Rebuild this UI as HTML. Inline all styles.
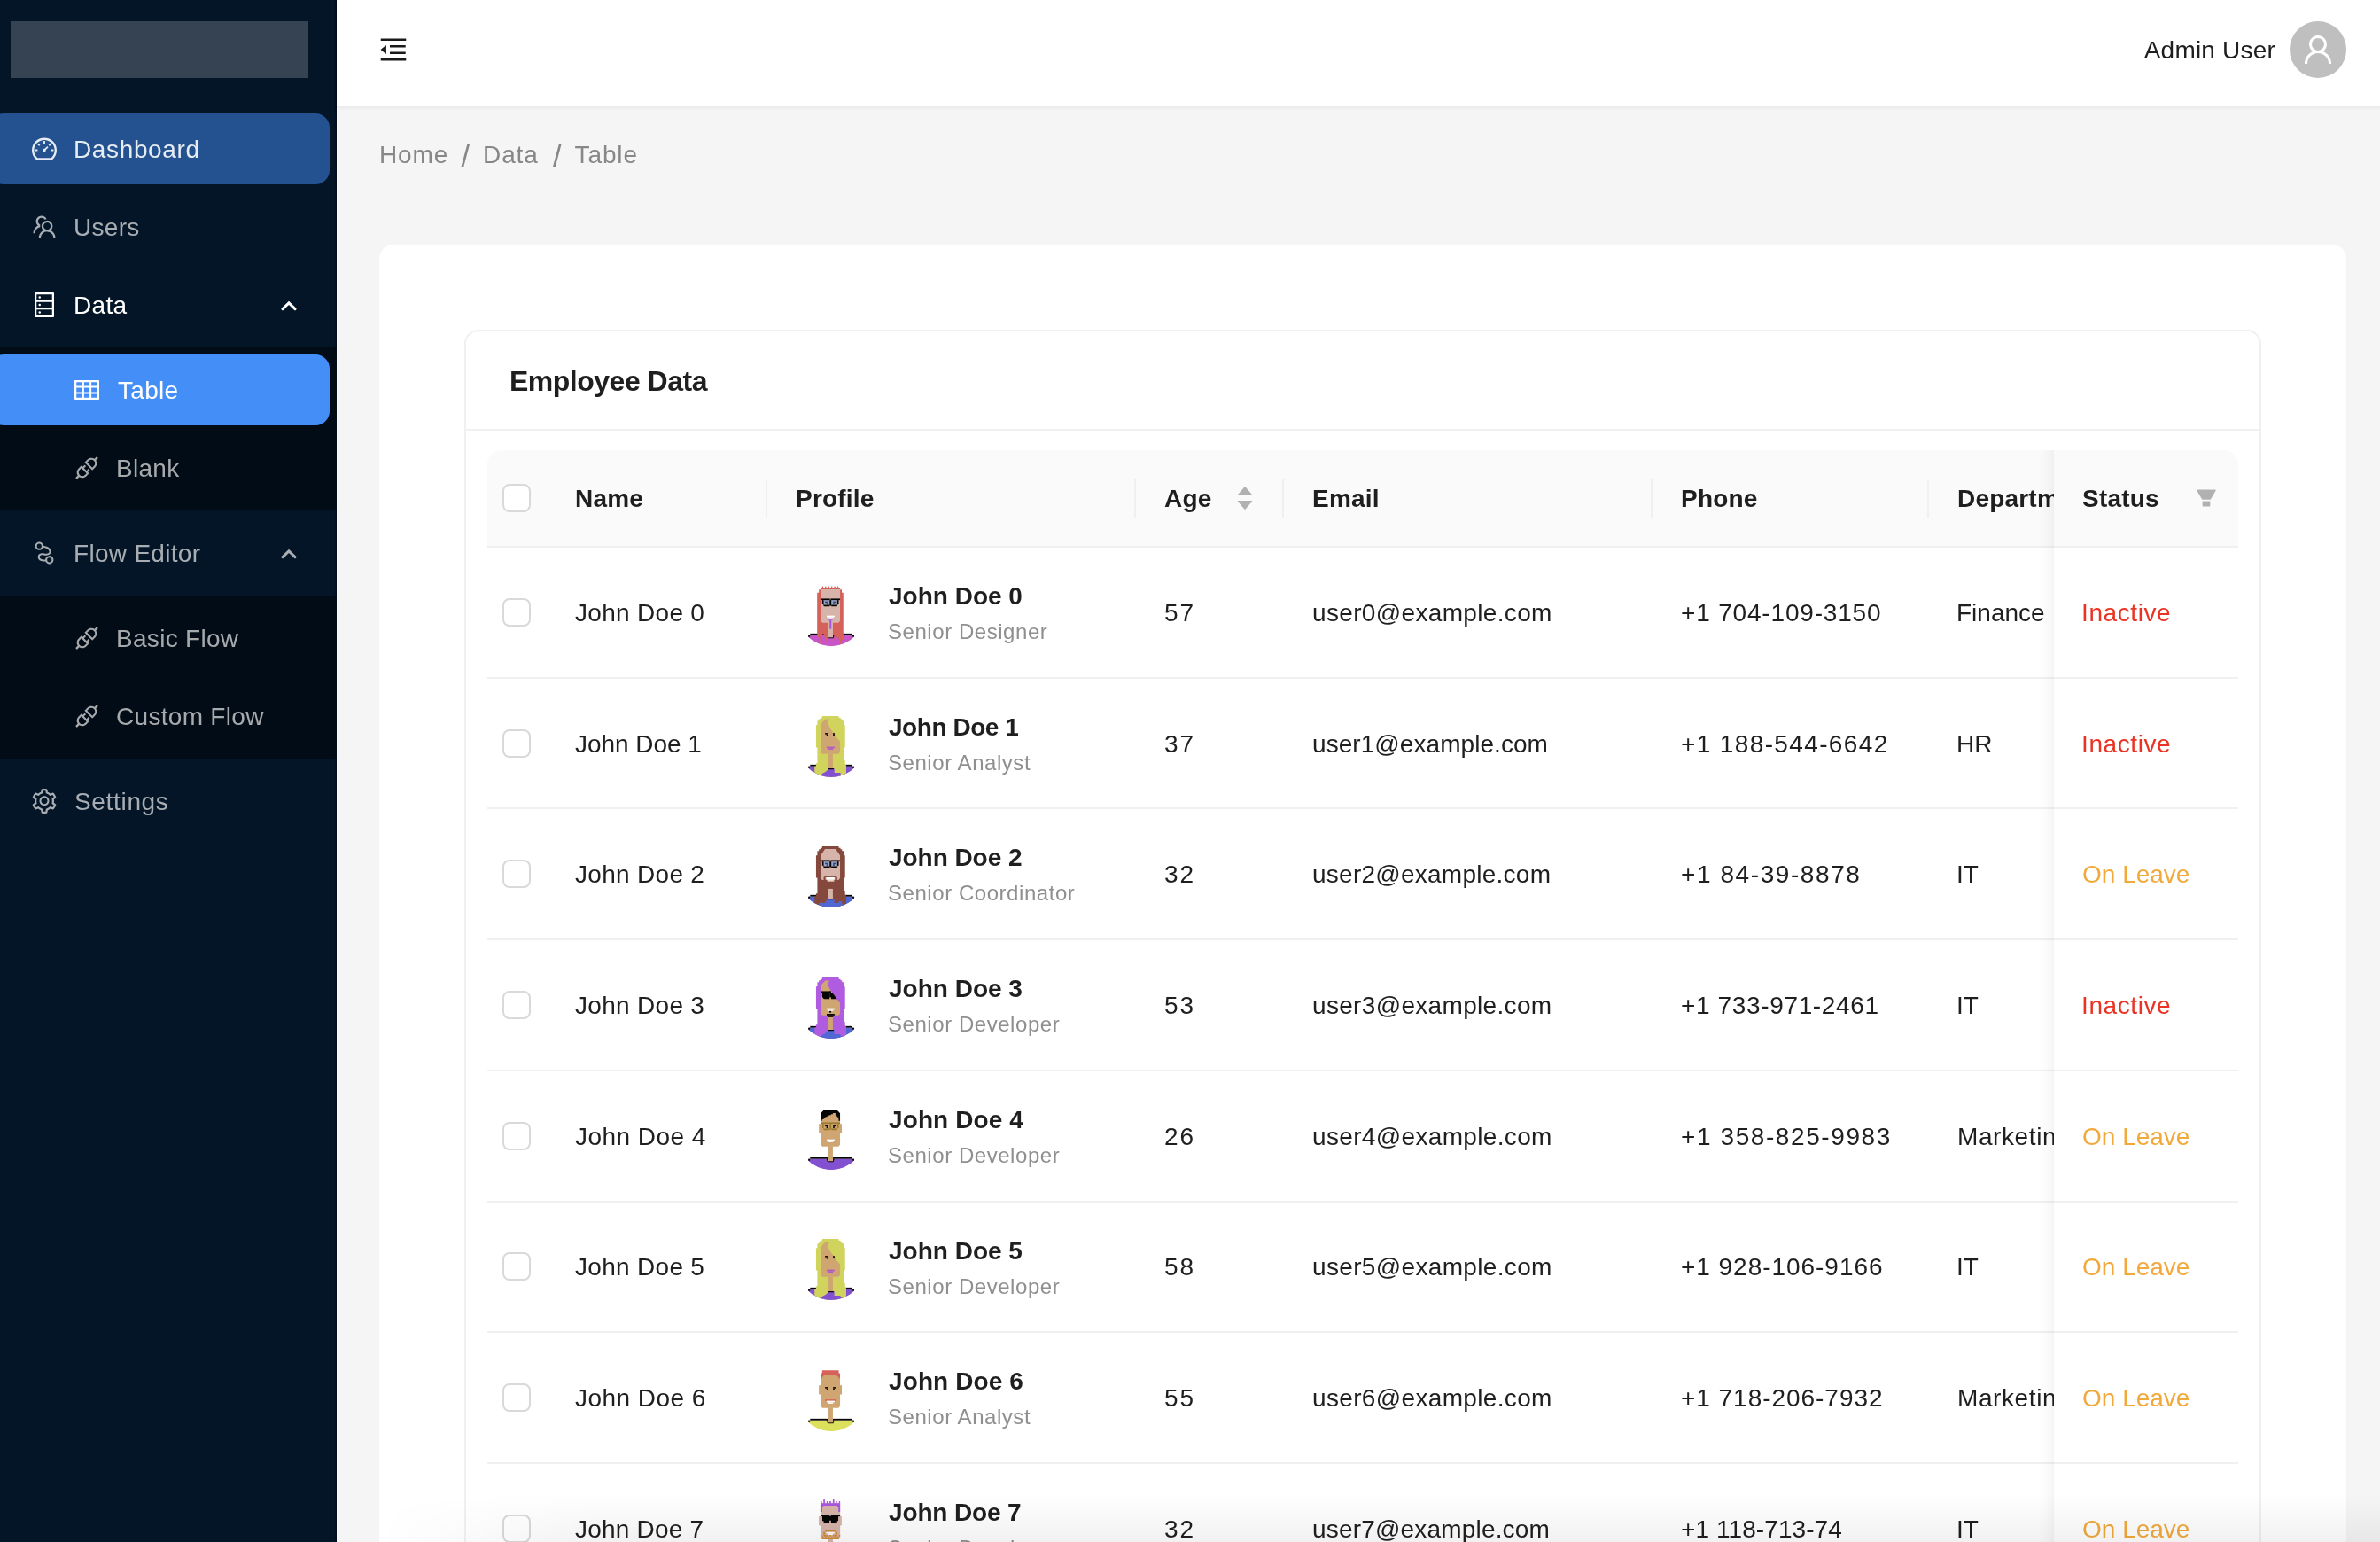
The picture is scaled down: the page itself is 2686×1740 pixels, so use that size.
<!DOCTYPE html>
<html lang="en">
<head>
<meta charset="utf-8">
<title>Employee Data</title>
<style>
*{box-sizing:border-box;margin:0;padding:0}
html,body{width:2686px;height:1740px;overflow:hidden;background:#f5f5f5}
body{font-family:"Liberation Sans",sans-serif;font-size:28px;line-height:44px;color:#1f1f1f;-webkit-font-smoothing:antialiased}
ul{list-style:none}
.app{position:relative;width:2686px;height:1740px;overflow:hidden;will-change:transform}
.ic{display:block;flex:none}

/* sider */
.sider{position:absolute;left:-20px;top:-8px;width:400px;height:1800px;background:#041527;box-shadow:inset -1.5px 0 0 #010d1e}
.logo{height:64px;margin:32px;background:#364352}
.menu{display:flow-root}
.mi{height:80px;margin:8px 8px;width:384px;border-radius:16px;padding-left:48px;display:flex;align-items:center;color:#a7adb3;position:relative;white-space:nowrap}
.mi .mt{margin-left:19px;letter-spacing:.3px;position:relative;top:1px}
.mi.hover{background:#24518f;color:#e6ecf4}
.mi.sel{background:#448ef7;color:#fff}
.mi.lv2{padding-left:96px}
.mi.open-sel{color:#fff}
.sub{background:#020c16;display:flow-root}
.sub .mi{color:#a7aaad}
.sub .mi.sel{color:#fff}
.arrow{position:absolute;right:36px;top:35.3px}

/* header */
.hdr{position:absolute;left:380px;top:-8px;width:2326px;height:128px;background:#fff;box-shadow:0 1px 5px rgba(0,21,41,.07)}
.fold{position:absolute;left:48px;top:48px;color:#1a1a1a}
.usr{position:absolute;right:58px;top:32px;height:64px;display:flex;align-items:center}
.uname{letter-spacing:.2px;color:#1f1f1f;position:relative;top:.5px}
.uav{width:64px;height:64px;border-radius:50%;background:#bfbfbf;color:#fff;margin-left:16px;display:flex;align-items:center;justify-content:center}

/* breadcrumb */
.bc{position:absolute;left:428px;top:152px;height:44px;line-height:44px;color:#878787;white-space:nowrap;display:flex}
.bc span{letter-spacing:.9px;position:relative;top:1px}
.bc .sep{margin:0 15px 0 16px;font-size:35px;top:3px;letter-spacing:0}
.bc .sep.s1{margin:0 15px 0 14px}

/* panel + card */
.panel{position:absolute;left:428px;top:276px;width:2220px;height:1600px;background:#fff;border-radius:16px}
.card{position:absolute;left:96px;top:96px;width:2028px;height:1500px;border:2px solid #f0f0f0;border-radius:16px;background:#fff}
.chead{height:112px;border-bottom:2px solid #f0f0f0;padding:0 48px;display:flex;align-items:center;margin-bottom:-2px}
.ctitle{font-size:32px;font-weight:700;line-height:48px;color:#1f1f1f;letter-spacing:-.5px;position:relative;left:1px;top:1px}
.cbody{padding:24px}
.table{position:relative;width:1976px;overflow:hidden;border-radius:16px 16px 0 0}

.thead{display:flex;height:110px;background:#fafafa;border-bottom:2px solid #f0f0f0;width:2400px}
.th{height:108px;display:flex;align-items:center;padding:0 32px;font-weight:700;position:relative;white-space:nowrap;flex:none}
.th.sepr::after{content:"";position:absolute;right:0;top:32px;width:2px;height:45px;background:#f0f0f0}
.tht{letter-spacing:.2px;position:relative;top:1px}
.c-sel{width:64px;padding:0 16px !important}
.c-name{width:252px;padding-left:35px !important}
.t-name{letter-spacing:.3px;position:relative;top:1px}
.t-age{letter-spacing:2px;position:relative;top:1px}
.t-mail{letter-spacing:.32px;position:relative;top:1px}
.t-phone{letter-spacing:.7px;position:relative;top:1px}
.t-dept{position:relative;left:-1px;top:1px}
.t-dept.mk{letter-spacing:.6px;left:0}
.c-prof{width:416px}
.c-age{width:167px}
.c-mail{width:416px}
.c-phone{width:312px}
.c-dept{width:300px}
.cb{position:relative;left:1px;display:block;width:32px;height:32px;border:2px solid #d9d9d9;border-radius:8px;background:#fff}
.sorter{margin-left:auto;display:flex;flex-direction:column;color:#b1b1b1;position:relative;left:0px}
.sorter .cd{margin-top:-7.2px}

.tr{display:flex;border-bottom:2px solid #f0f0f0;width:2400px}
.td{display:flex;align-items:center;padding:32px 32px;flex:none;white-space:nowrap}
.av{width:80px;height:80px;border:2px solid transparent;border-radius:50%;overflow:hidden;display:block;flex:none}
.av svg{display:block}
.pt{margin-left:24px;display:flex;flex-direction:column}
.pn{font-weight:700;line-height:44px;display:block;position:relative;left:1px;top:1px}
.pr{font-size:24px;line-height:37.7143px;color:#8f8f8f;display:block;letter-spacing:.55px}

.fixed{position:absolute;right:0;top:0;width:208px;background:#fff}
.fshadow{position:absolute;left:-60px;top:0;bottom:0;width:60px;box-shadow:inset -20px 0 16px -16px rgba(5,5,5,.06);pointer-events:none}
.fth{height:110px;background:#fafafa;border-bottom:2px solid #f0f0f0;display:flex;align-items:center;padding:0 32px;font-weight:700;border-top-right-radius:16px}
.filt{margin-left:auto;color:#b1b1b1;position:relative;left:8px}
.str{height:147.7143px;border-bottom:2px solid #f0f0f0;display:flex;align-items:center;padding:0 32px;white-space:nowrap}
.str span{top:1px}
.inact{color:#ea3323;letter-spacing:.6px;position:relative;left:-1px}
.leave{color:#f2a93b;position:relative}

.fade{position:absolute;left:428px;right:0;bottom:0;height:54px;background:linear-gradient(to bottom,rgba(0,0,0,0),rgba(0,0,0,.055));pointer-events:none;-webkit-mask-image:linear-gradient(to right,transparent 0,#000 260px);mask-image:linear-gradient(to right,transparent 0,#000 260px)}
.edge{position:absolute;left:380px;top:122px;width:1.5px;bottom:0;background:rgba(255,255,255,.85)}

</style>
</head>
<body>
<div class="app">

<aside class="sider">
  <div class="logo"></div>
  <ul class="menu">
    <li class="mi hover"><svg class="ic " width="28" height="28" viewBox="64 64 896 896" fill="currentColor"><path d="M924.800 385.600a446.700 446.700 0 00-96-142.400 446.700 446.700 0 00-142.400-96C631.100 123.800 572.500 112 512 112s-119.100 11.800-174.400 35.200a446.700 446.700 0 00-142.400 96 446.700 446.700 0 00-96 142.400C75.800 440.900 64 499.500 64 560c0 132.700 58.300 257.700 159.900 343.100l1.700 1.400c5.800 4.800 13.100 7.500 20.600 7.500h531.700c7.500 0 14.800-2.700 20.600-7.500l1.700-1.400C901.700 817.700 960 692.700 960 560c0-60.500-11.900-119.100-35.200-174.400zM761.400 836H262.600A371.120 371.120 0 01140 560c0-99.400 38.700-192.800 109-263 70.300-70.300 163.700-109 263-109 99.400 0 192.800 38.700 263 109 70.300 70.300 109 163.700 109 263 0 105.600-44.500 205.500-122.600 276zM623.500 421.500a8.030 8.030 0 00-11.300 0L527.700 506c-18.700-5-39.400-.2-54.100 14.500a55.950 55.950 0 000 79.200 55.950 55.950 0 0079.200 0 55.870 55.870 0 0014.500-54.100l84.500-84.500c3.100-3.100 3.100-8.200 0-11.300l-28.300-28.300zM490 320h44c4.400 0 8-3.600 8-8v-80c0-4.400-3.600-8-8-8h-44c-4.400 0-8 3.600-8 8v80c0 4.400 3.600 8 8 8zm260 218v44c0 4.400 3.600 8 8 8h80c4.400 0 8-3.600 8-8v-44c0-4.400-3.600-8-8-8h-80c-4.400 0-8 3.600-8 8zm12.700-197.200l-31.100-31.100a8.030 8.030 0 00-11.300 0l-56.600 56.600a8.030 8.030 0 000 11.300l31.100 31.100c3.100 3.100 8.200 3.100 11.300 0l56.600-56.600c3.100-3.100 3.100-8.200 0-11.300zm-458.600-31.100a8.030 8.030 0 00-11.300 0l-31.100 31.100a8.030 8.030 0 000 11.300l56.600 56.600c3.100 3.100 8.200 3.100 11.300 0l31.100-31.100c3.100-3.100 3.100-8.200 0-11.300l-56.600-56.600zM262 530h-80c-4.400 0-8 3.600-8 8v44c0 4.400 3.600 8 8 8h80c4.400 0 8-3.600 8-8v-44c0-4.400-3.600-8-8-8z"/></svg><span class="mt" style="letter-spacing:.63px">Dashboard</span></li>
    <li class="mi "><svg class="ic " width="28" height="28" viewBox="64 64 896 896" fill="currentColor"><path d="M824.200 699.900a301.550 301.550 0 00-86.400-60.400C783.100 602.800 812 546.800 812 484c0-110.800-92.400-201.700-203.200-200-109.100 1.700-197 90.600-197 200 0 62.800 29 118.800 74.200 155.500a300.950 300.950 0 00-86.400 60.400C345 754.600 314 826.800 312 903.800a8 8 0 008 8.200h56c4.300 0 7.900-3.400 8-7.700 1.900-58 25.400-112.300 66.700-153.500A226.620 226.620 0 01612 684c60.900 0 118.200 23.700 161.300 66.800C814.500 792 838 846.300 840 904.300c.1 4.300 3.700 7.700 8 7.700h56a8 8 0 008-8.200c-2-77-33-149.200-87.800-203.900zM612 612c-34.200 0-66.400-13.300-90.500-37.500a126.860 126.860 0 01-37.500-91.800c.3-32.800 13.400-64.500 36.300-88 24-24.600 56.100-38.300 90.400-38.700 33.900-.3 66.800 12.900 91 36.600 24.800 24.300 38.400 56.800 38.400 91.400 0 34.200-13.300 66.300-37.500 90.500A127.300 127.300 0 01612 612zM361.500 510.400c-.9-8.700-1.400-17.500-1.400-26.400 0-15.900 1.500-31.400 4.300-46.500.7-3.600-1.200-7.300-4.500-8.800-13.600-6.100-26.100-14.500-36.900-25.100a127.540 127.540 0 01-38.700-95.400c.9-32.100 13.800-62.600 36.300-85.600 24.700-25.300 57.900-39.100 93.200-38.700 31.900.3 62.700 12.600 86 34.400 7.900 7.400 14.700 15.600 20.400 24.400 2 3.100 5.900 4.400 9.300 3.200 17.600-6.100 36.200-10.400 55.300-12.400 5.600-.6 8.800-6.600 6.300-11.600-32.500-64.300-98.900-108.700-175.700-109.900-110.900-1.700-203.300 89.200-203.300 199.900 0 62.800 28.900 118.800 74.200 155.500-31.800 14.700-61.100 35-86.500 60.400-54.800 54.700-85.800 126.900-87.800 204a8 8 0 008 8.200h56.100c4.300 0 7.900-3.400 8-7.700 1.900-58 25.400-112.300 66.700-153.500 29.400-29.400 65.400-49.800 104.700-59.700 3.900-1 6.500-4.700 6-8.700z"/></svg><span class="mt">Users</span></li>
    <li class="sm">
      <div class="mi st open-sel"><svg class="ic " width="28" height="28" viewBox="64 64 896 896" fill="currentColor"><path d="M832 64H192c-17.700 0-32 14.300-32 32v832c0 17.700 14.300 32 32 32h640c17.700 0 32-14.300 32-32V96c0-17.700-14.300-32-32-32zm-600 72h560v208H232V136zm560 480H232V408h560v208zm0 272H232V680h560v208zM304 240a40 40 0 1080 0 40 40 0 10-80 0zm0 272a40 40 0 1080 0 40 40 0 10-80 0zm0 272a40 40 0 1080 0 40 40 0 10-80 0z"/></svg><span class="mt">Data</span><svg class="arrow" width="20" height="12" viewBox="0 0 20 12"><path d="M3 9.6 L10 2.8 L17 9.6" fill="none" stroke="currentColor" stroke-width="3" stroke-linecap="round" stroke-linejoin="miter"/></svg></div>
      <ul class="sub">
        <li class="mi sel lv2"><svg class="ic " width="28" height="28" viewBox="64 64 896 896" fill="currentColor"><path d="M928 160H96c-17.700 0-32 14.300-32 32v640c0 17.700 14.300 32 32 32h832c17.700 0 32-14.300 32-32V192c0-17.700-14.300-32-32-32zm-40 208H676V232h212v136zm0 224H676V432h212v160zM412 432h200v160H412V432zm200-64H412V232h200v136zm-476 64h212v160H136V432zm0-200h212v136H136V232zm0 424h212v136H136V656zm276 0h200v136H412V656zm476 136H676V656h212v136z"/></svg><span class="mt" style="margin-left:21px">Table</span></li>
        <li class="mi lv2"><svg class="ic " width="28" height="28" viewBox="64 64 896 896" fill="currentColor"><path d="M917.700 148.800l-42.400-42.400c-1.600-1.600-3.600-2.300-5.700-2.300s-4.100.8-5.700 2.300l-76.100 76.100a199.270 199.270 0 00-112.100-34.300c-51.200 0-102.400 19.500-141.500 58.600L432.300 308.700a8.030 8.030 0 000 11.300L704 591.700c1.600 1.600 3.600 2.300 5.700 2.300 2 0 4.100-.8 5.700-2.300l101.900-101.900c68.900-69 77-175.700 24.300-253.500l76.100-76.100c3.100-3.200 3.100-8.300 0-11.400zM769.100 441.700l-59.400 59.400-186.800-186.800 59.400-59.400c24.900-24.900 58.100-38.700 93.400-38.700 35.300 0 68.400 13.700 93.400 38.700 24.900 24.900 38.700 58.100 38.700 93.400 0 35.300-13.800 68.400-38.700 93.400zm-190.200 105a8.030 8.030 0 00-11.300 0L501 613.300 410.700 523l66.700-66.700c3.100-3.100 3.100-8.200 0-11.300L441 408.600a8.030 8.030 0 00-11.300 0L363 475.300l-43-43a7.850 7.850 0 00-5.700-2.300c-2 0-4.100.8-5.700 2.300L206.800 534.200c-68.900 69-77 175.700-24.300 253.500l-76.100 76.100a8.030 8.030 0 000 11.300l42.400 42.400c1.600 1.600 3.600 2.300 5.700 2.300s4.100-.8 5.700-2.300l76.100-76.100c33.700 22.900 72.900 34.300 112.100 34.300 51.200 0 102.400-19.500 141.500-58.600l101.900-101.900c3.100-3.100 3.100-8.200 0-11.300l-43-43 66.700-66.700c3.100-3.100 3.100-8.200 0-11.300l-36.600-36.200zM441.700 769.100a131.320 131.320 0 01-93.400 38.700c-35.300 0-68.400-13.700-93.400-38.700a131.320 131.320 0 01-38.700-93.400c0-35.300 13.700-68.400 38.700-93.400l59.400-59.400 186.800 186.800-59.400 59.400z"/></svg><span class="mt">Blank</span></li>
      </ul>
    </li>
    <li class="sm">
      <div class="mi st "><svg class="ic " width="28" height="28" viewBox="64 64 896 896" fill="currentColor"><path d="M843.500 737.400c-12.400-75.200-79.200-129.100-155.300-125.400S550.900 676 546 752c-153.500-4.800-208-40.700-199.100-113.700 3.300-27.300 19.800-41.900 50.100-49 18.400-4.300 38.800-4.900 57.300-3.200 1.700.2 3.500.3 5.200.5 11.300 2.700 22.800 5 34.300 6.800 34.100 5.600 68.800 8.400 101.800 6.600 92.800-5 156-45.900 159.200-132.700 3.100-84.100-54.700-143.700-147.900-183.600-29.900-12.800-61.600-22.700-93.300-30.200-14.300-3.400-26.300-5.700-35.200-7.200-7.900-75.900-71.500-133.800-147.800-134.400-76.300-.6-140.900 56.100-150.100 131.900s40 146.300 114.200 163.900c74.200 17.600 149.900-23.300 175.700-95.100 9.400 1.700 18.700 3.600 28 5.800 28.200 6.600 56.400 15.400 82.400 26.600 70.700 30.200 109.300 70.100 107.500 119.900-1.600 44.600-33.600 65.200-96.200 68.600-27.500 1.500-57.600-.9-87.300-5.800-8.300-1.400-15.900-2.800-22.600-4.300-3.900-.8-6.600-1.500-7.800-1.800l-3.100-.6c-2.200-.3-5.900-.8-10.700-1.300-25-2.300-52.100-1.500-78.500 4.600-55.200 12.900-93.900 47.200-101.100 105.800-15.700 126.200 78.600 184.700 276 188.900 29.100 70.400 106.400 107.900 179.600 87 73.300-20.900 119.300-93.400 106.900-168.600zM329.100 345.200a83.300 83.300 0 11.010-166.610 83.300 83.300 0 01-.010 166.610zM695.600 845a83.300 83.300 0 11.010-166.610A83.300 83.300 0 01695.600 845z"/></svg><span class="mt">Flow Editor</span><svg class="arrow" width="20" height="12" viewBox="0 0 20 12"><path d="M3 9.6 L10 2.8 L17 9.6" fill="none" stroke="currentColor" stroke-width="3" stroke-linecap="round" stroke-linejoin="miter"/></svg></div>
      <ul class="sub">
        <li class="mi lv2"><svg class="ic " width="28" height="28" viewBox="64 64 896 896" fill="currentColor"><path d="M917.700 148.800l-42.400-42.400c-1.600-1.600-3.600-2.300-5.700-2.300s-4.100.8-5.700 2.300l-76.100 76.100a199.270 199.270 0 00-112.100-34.300c-51.200 0-102.400 19.500-141.500 58.600L432.300 308.700a8.030 8.030 0 000 11.300L704 591.700c1.600 1.600 3.600 2.300 5.700 2.300 2 0 4.100-.8 5.700-2.300l101.900-101.900c68.900-69 77-175.700 24.300-253.500l76.100-76.100c3.100-3.200 3.100-8.300 0-11.400zM769.100 441.700l-59.400 59.400-186.800-186.800 59.400-59.400c24.900-24.900 58.100-38.700 93.400-38.700 35.300 0 68.400 13.700 93.400 38.700 24.900 24.900 38.700 58.100 38.700 93.400 0 35.300-13.800 68.400-38.700 93.400zm-190.200 105a8.030 8.030 0 00-11.300 0L501 613.300 410.700 523l66.700-66.700c3.100-3.100 3.100-8.200 0-11.300L441 408.600a8.030 8.030 0 00-11.300 0L363 475.300l-43-43a7.850 7.850 0 00-5.700-2.300c-2 0-4.100.8-5.700 2.300L206.800 534.200c-68.900 69-77 175.700-24.300 253.500l-76.100 76.100a8.030 8.030 0 000 11.300l42.400 42.400c1.600 1.600 3.600 2.300 5.700 2.300s4.100-.8 5.700-2.300l76.100-76.100c33.700 22.900 72.900 34.300 112.100 34.300 51.200 0 102.400-19.500 141.500-58.600l101.900-101.900c3.100-3.100 3.100-8.200 0-11.300l-43-43 66.700-66.700c3.100-3.100 3.100-8.200 0-11.300l-36.600-36.200zM441.700 769.100a131.320 131.320 0 01-93.400 38.700c-35.300 0-68.400-13.700-93.400-38.700a131.320 131.320 0 01-38.700-93.400c0-35.300 13.700-68.400 38.700-93.400l59.400-59.400 186.800 186.800-59.400 59.400z"/></svg><span class="mt">Basic Flow</span></li>
        <li class="mi lv2"><svg class="ic " width="28" height="28" viewBox="64 64 896 896" fill="currentColor"><path d="M917.700 148.800l-42.400-42.400c-1.600-1.600-3.600-2.300-5.700-2.300s-4.100.8-5.700 2.300l-76.100 76.100a199.270 199.270 0 00-112.100-34.300c-51.200 0-102.400 19.500-141.500 58.600L432.300 308.700a8.030 8.030 0 000 11.300L704 591.700c1.600 1.600 3.600 2.300 5.700 2.300 2 0 4.100-.8 5.700-2.300l101.900-101.900c68.900-69 77-175.700 24.300-253.500l76.100-76.100c3.100-3.200 3.100-8.300 0-11.400zM769.100 441.700l-59.400 59.400-186.800-186.800 59.400-59.400c24.900-24.900 58.100-38.700 93.400-38.700 35.300 0 68.400 13.700 93.400 38.700 24.900 24.900 38.700 58.100 38.700 93.400 0 35.300-13.800 68.400-38.700 93.400zm-190.200 105a8.030 8.030 0 00-11.300 0L501 613.300 410.700 523l66.700-66.700c3.100-3.100 3.100-8.200 0-11.300L441 408.600a8.030 8.030 0 00-11.300 0L363 475.300l-43-43a7.850 7.850 0 00-5.700-2.300c-2 0-4.100.8-5.700 2.300L206.800 534.200c-68.900 69-77 175.700-24.300 253.500l-76.100 76.100a8.030 8.030 0 000 11.300l42.400 42.400c1.600 1.600 3.600 2.300 5.700 2.300s4.100-.8 5.700-2.300l76.100-76.100c33.700 22.900 72.900 34.300 112.100 34.300 51.200 0 102.400-19.500 141.500-58.600l101.900-101.900c3.100-3.100 3.100-8.200 0-11.300l-43-43 66.700-66.700c3.100-3.100 3.100-8.200 0-11.300l-36.600-36.200zM441.700 769.100a131.320 131.320 0 01-93.400 38.700c-35.300 0-68.400-13.700-93.400-38.700a131.320 131.320 0 01-38.700-93.400c0-35.300 13.700-68.400 38.700-93.400l59.400-59.400 186.800 186.800-59.400 59.400z"/></svg><span class="mt">Custom Flow</span></li>
      </ul>
    </li>
    <li class="mi "><svg class="ic " width="28" height="28" viewBox="64 64 896 896" fill="currentColor"><path d="M924.800 625.700l-65.500-56c3.100-19 4.700-38.400 4.700-57.800s-1.600-38.800-4.700-57.800l65.500-56a32.030 32.030 0 009.300-35.200l-.9-2.600a442.740 442.740 0 00-79.700-137.900l-1.800-2.100a32.120 32.120 0 00-35.100-9.500l-81.300 28.900c-30-24.600-63.500-44-99.700-57.600l-15.700-85a32.050 32.050 0 00-25.800-25.700l-2.700-.5c-52.100-9.400-106.900-9.400-159 0l-2.700.5a32.050 32.050 0 00-25.800 25.700l-15.800 85.400a351.860 351.860 0 00-99 57.400l-81.900-29.100a32 32 0 00-35.100 9.500l-1.800 2.100a446.020 446.020 0 00-79.700 137.900l-.9 2.600c-4.500 12.500-.8 26.500 9.300 35.200l66.300 56.600c-3.100 18.800-4.600 38-4.600 57.100 0 19.200 1.500 38.400 4.600 57.100L99 625.500a32.030 32.030 0 00-9.300 35.200l.9 2.600c18.100 50.400 44.900 96.900 79.700 137.900l1.800 2.100a32.120 32.120 0 0035.100 9.500l81.900-29.100c29.800 24.500 63.100 43.900 99 57.400l15.800 85.400a32.050 32.050 0 0025.800 25.700l2.700.5a449.400 449.400 0 00159 0l2.700-.5a32.050 32.050 0 0025.800-25.700l15.700-85a350 350 0 0099.700-57.600l81.300 28.900a32 32 0 0035.100-9.500l1.800-2.100c34.800-41.100 61.600-87.500 79.700-137.900l.9-2.600c4.500-12.300.8-26.300-9.300-35zM788.300 465.900c2.500 15.100 3.800 30.600 3.800 46.100s-1.300 31-3.800 46.100l-6.600 40.100 74.700 63.900a370.030 370.030 0 01-42.600 73.600L721 702.800l-31.400 25.800c-23.900 19.600-50.500 35-79.300 45.800l-38.100 14.300-17.900 97a377.500 377.500 0 01-85 0l-17.900-97.200-37.800-14.500c-28.500-10.800-55-26.200-78.700-45.700l-31.400-25.900-93.400 33.200c-17-22.900-31.200-47.600-42.600-73.600l75.500-64.500-6.500-40c-2.400-14.900-3.700-30.300-3.700-45.500 0-15.300 1.200-30.600 3.700-45.500l6.500-40-75.500-64.500c11.300-26.100 25.600-50.700 42.600-73.600l93.400 33.200 31.400-25.900c23.700-19.500 50.200-34.900 78.700-45.700l37.900-14.300 17.900-97.200c28.100-3.200 56.800-3.200 85 0l17.900 97 38.100 14.300c28.700 10.800 55.400 26.200 79.300 45.800l31.400 25.800 92.800-32.900c17 22.900 31.200 47.600 42.600 73.600L781.800 426l6.500 39.900zM512 326c-97.200 0-176 78.800-176 176s78.800 176 176 176 176-78.800 176-176-78.800-176-176-176zm79.200 255.200A111.600 111.600 0 01512 614c-29.900 0-58-11.700-79.200-32.800A111.600 111.600 0 01400 502c0-29.900 11.700-58 32.800-79.200C454 401.600 482.100 390 512 390c29.900 0 58 11.600 79.200 32.800A111.600 111.600 0 01624 502c0 29.900-11.700 58-32.800 79.200z"/></svg><span class="mt" style="letter-spacing:.67px;margin-left:20px">Settings</span></li>
  </ul>
</aside>

<header class="hdr">
  <span class="fold"><svg class="ic " width="32" height="32" viewBox="64 64 896 896" fill="currentColor"><path d="M408 442h480c4.400 0 8-3.600 8-8v-56c0-4.400-3.600-8-8-8H408c-4.400 0-8 3.600-8 8v56c0 4.400 3.600 8 8 8zm-8 204c0 4.400 3.600 8 8 8h480c4.400 0 8-3.600 8-8v-56c0-4.400-3.600-8-8-8H408c-4.400 0-8 3.600-8 8v56zm504-486H120c-4.400 0-8 3.600-8 8v56c0 4.400 3.600 8 8 8h784c4.400 0 8-3.600 8-8v-56c0-4.400-3.600-8-8-8zm0 632H120c-4.400 0-8 3.600-8 8v56c0 4.400 3.600 8 8 8h784c4.400 0 8-3.600 8-8v-56c0-4.400-3.600-8-8-8zM115.400 518.900L271.700 642c5.800 4.600 14.400.5 14.400-6.900V388.900c0-7.400-8.500-11.500-14.400-6.900L115.400 505.100a8.740 8.740 0 000 13.800z"/></svg></span>
  <div class="usr"><span class="uname">Admin User</span><span class="uav"><svg class="ic " width="36" height="36" viewBox="64 64 896 896" fill="currentColor"><path d="M858.500 763.600a374 374 0 00-80.600-119.500 375.630 375.630 0 00-119.500-80.600c-.4-.2-.8-.3-1.200-.5C719.500 518 760 444.700 760 362c0-137-111-248-248-248S264 225 264 362c0 82.700 40.500 156 102.800 201.100-.4.200-.8.300-1.200.5-44.800 18.900-85 46-119.500 80.600a375.630 375.630 0 00-80.600 119.500A371.700 371.700 0 00136 901.800a8 8 0 008 8.200h60c4.400 0 7.900-3.500 8-7.800 2-77.200 33-149.500 87.800-204.300 56.700-56.700 132-87.900 212.200-87.900s155.500 31.200 212.200 87.900C779 752.700 810 825 812 902.200c.1 4.400 3.600 7.800 8 7.800h60a8 8 0 008-8.200c-1-47.800-10.900-94.300-29.500-138.200zM512 534c-45.900 0-89.100-17.900-121.600-50.400S340 407.900 340 362c0-45.900 17.900-89.100 50.400-121.600S466.100 190 512 190s89.100 17.900 121.600 50.400S684 316.100 684 362c0 45.900-17.900 89.100-50.400 121.600S557.900 534 512 534z"/></svg></span></div>
</header>

<nav class="bc"><span>Home</span><span class="sep s1">/</span><span>Data</span><span class="sep">/</span><span>Table</span></nav>
<main class="panel">
  <section class="card">
    <div class="chead"><span class="ctitle">Employee Data</span></div>
    <div class="cbody">
      <div class="table">
        
<div class="thead">
  <div class="th c-sel"><span class="cb"></span></div>
  <div class="th c-name sepr"><span class="tht">Name</span></div>
  <div class="th c-prof sepr"><span class="tht">Profile</span></div>
  <div class="th c-age sepr"><span class="tht">Age</span><span class="sorter"><svg class="ic cu" width="24" height="24" viewBox="0 0 1024 1024" fill="currentColor"><path d="M858.900 689L530.500 308.200c-9.400-10.900-27.500-10.900-37 0L165.100 689c-12.200 14.200-1.200 35 18.500 35h656.800c19.700 0 30.700-20.800 18.500-35z"/></svg><svg class="ic cd" width="24" height="24" viewBox="0 0 1024 1024" fill="currentColor"><path d="M840.400 300H183.600c-19.700 0-30.700 20.800-18.500 35l328.400 380.800c9.400 10.900 27.500 10.900 37 0L858.900 335c12.200-14.200 1.200-35-18.500-35z"/></svg></span></div>
  <div class="th c-mail sepr"><span class="tht">Email</span></div>
  <div class="th c-phone sepr"><span class="tht">Phone</span></div>
  <div class="th c-dept"><span class="tht">Department</span></div>
</div>
        
<div class="tr">
  <div class="td c-sel"><span class="cb"></span></div>
  <div class="td c-name"><span class="t-name" style="letter-spacing:0.3px">John Doe 0</span></div>
  <div class="td c-prof"><span class="av"><svg width="76" height="76" viewBox="0 0 76 76"><rect x="14.29" y="63.58" width="47.56" height="13.31" fill="#c855c8"/><rect x="0" y="66.14" width="76.89" height="10.74" fill="#c855c8"/><polygon points="12.07,66.14 14.29,64.07 14.29,66.14" fill="#c855c8"/><polygon points="64.07,66.14 61.85,64.07 61.85,66.14" fill="#c855c8"/><rect x="14.29" y="61.85" width="47.56" height="1.82" fill="#060606"/><rect x="12.07" y="63.58" width="2.32" height="2.56" rx="0.9" fill="#060606"/><rect x="61.75" y="63.58" width="2.32" height="2.56" rx="0.9" fill="#060606"/><polygon points="13.21,66.14 14.39,64.47 14.39,66.14" fill="#c855c8"/><polygon points="62.94,66.14 61.75,64.47 61.75,66.14" fill="#c855c8"/><rect x="34.5" y="49.29" width="5.42" height="16.86" fill="#d7b4aa"/><polygon points="32.63,63.58 34.5,63.58 34.5,66.14 40.17,66.14 40.17,63.58 41.79,63.58 40.51,67.23 34.11,67.23" fill="#060606"/><rect x="34.5" y="61.85" width="5.42" height="4.29" fill="#d7b4aa"/><polygon points="26.12,10.6 48.05,10.6 48.05,12.32 50.02,12.32 50.02,15.77 51.75,15.77 51.75,69.25 49.78,69.25 49.78,73.44 48.05,73.44 48.05,69.49 44.36,66.04 42.88,65.55 42.88,70.48 41.65,70.48 41.65,64.07 39.92,64.07 39.92,49.29 34.25,49.29 34.25,72.45 32.77,72.45 32.53,69 29.57,64.07 27.6,63.58 25.63,64.07 25.63,72.94 24.15,72.94 24.15,66.29 22.18,66.29 22.18,15.77 24.15,15.77 24.15,12.32 26.12,12.32" fill="#d6605a"/><polygon points="27.25,10.69 27.94,8.62 28.73,8.62 29.42,10.69" fill="#d6605a"/><polygon points="30.7,10.69 31.39,8.62 32.18,8.62 32.87,10.69" fill="#d6605a"/><polygon points="34.15,10.69 34.84,8.62 35.63,8.62 36.32,10.69" fill="#d6605a"/><polygon points="37.6,10.69 38.29,8.62 39.08,8.62 39.77,10.69" fill="#d6605a"/><polygon points="41.05,10.69 41.74,8.62 42.53,8.62 43.22,10.69" fill="#d6605a"/><polygon points="44.5,10.69 45.19,8.62 45.98,8.62 46.67,10.69" fill="#d6605a"/><polygon points="26.12,12.07 48.05,12.07 48.05,47.71 46.23,49.78 28.09,49.78 26.12,47.71" fill="#d7b4aa"/><rect x="28.34" y="62.2" width="1.23" height="1.38" fill="#060606"/><rect x="29.57" y="24.15" width="6.75" height="5.27" fill="#9aa2c8"/><rect x="38.1" y="24.15" width="6.75" height="5.27" fill="#9aa2c8"/><rect x="31.05" y="25.63" width="3.2" height="1.48" fill="#2f4a73"/><rect x="32.68" y="27.11" width="1.72" height="2.07" fill="#2f4a73"/><rect x="40.17" y="25.63" width="3.2" height="1.48" fill="#2f4a73"/><rect x="40.17" y="27.11" width="1.63" height="2.07" fill="#2f4a73"/><rect x="26.12" y="22.42" width="21.93" height="1.72" fill="#050505"/><rect x="27.85" y="24.15" width="1.72" height="4.68" fill="#050505"/><rect x="36.22" y="24.15" width="1.97" height="6.41" fill="#050505"/><rect x="44.85" y="24.15" width="1.72" height="4.68" fill="#050505"/><polygon points="28.83,28.83 29.57,28.83 29.57,29.42 36.22,29.42 36.22,31.15 29.82,31.15" fill="#050505"/><polygon points="45.59,28.83 44.85,28.83 44.85,29.42 38.2,29.42 38.2,31.15 44.6,31.15" fill="#050505"/><rect x="36.57" y="22.42" width="1.03" height="1.13" fill="#e9cfc6"/><rect x="33.02" y="41.65" width="8.87" height="1.72" fill="#fff"/><rect x="34.75" y="43.37" width="5.42" height="1.48" fill="#fff"/><rect x="34.25" y="44.85" width="5.77" height="1.77" fill="#a855e0"/><rect x="36.22" y="46.62" width="2.02" height="10.05" fill="#a855e0"/></svg></span><span class="pt"><span class="pn" style="letter-spacing:0px">John Doe 0</span><span class="pr">Senior Designer</span></span></div>
  <div class="td c-age"><span class="t-age">57</span></div>
  <div class="td c-mail"><span class="t-mail" style="letter-spacing:0.34px">user0@example.com</span></div>
  <div class="td c-phone"><span class="t-phone" style="letter-spacing:0.82px">+1 704-109-3150</span></div>
  <div class="td c-dept"><span class="t-dept">Finance</span></div>
</div>
<div class="tr">
  <div class="td c-sel"><span class="cb"></span></div>
  <div class="td c-name"><span class="t-name" style="letter-spacing:-0.03px">John Doe 1</span></div>
  <div class="td c-prof"><span class="av"><svg width="76" height="76" viewBox="0 0 76 76"><rect x="14.29" y="63.58" width="47.56" height="13.31" fill="#8350d1"/><rect x="0" y="66.14" width="76.89" height="10.74" fill="#8350d1"/><polygon points="12.07,66.14 14.29,64.07 14.29,66.14" fill="#8350d1"/><polygon points="64.07,66.14 61.85,64.07 61.85,66.14" fill="#8350d1"/><rect x="14.29" y="61.85" width="47.56" height="1.82" fill="#060606"/><rect x="12.07" y="63.58" width="2.32" height="2.56" rx="0.9" fill="#060606"/><rect x="61.75" y="63.58" width="2.32" height="2.56" rx="0.9" fill="#060606"/><polygon points="13.21,66.14 14.39,64.47 14.39,66.14" fill="#8350d1"/><polygon points="62.94,66.14 61.75,64.47 61.75,66.14" fill="#8350d1"/><polygon points="27.85,6.9 46.57,6.9 46.57,8.87 48.55,8.87 48.55,10.35 50.27,10.35 50.27,12.32 52,12.32 52,17.25 53.72,17.25 53.72,42.39 52,42.39 52,56.92 53.72,56.92 53.72,61.85 54.95,61.85 54.95,76.89 19.22,76.89 19.22,63.58 20.95,63.58 20.95,60.13 22.42,60.13 22.42,42.39 20.95,42.39 20.95,17.25 22.42,17.25 22.42,12.32 24.15,12.32 24.15,10.35 25.87,10.35 25.87,8.87 27.85,8.87" fill="#d0d45c"/><polygon points="31.54,10.6 35.73,10.6 35.73,11.83 34.5,12.91 34.11,14.79 35.73,18.73 37.46,21.69 39.43,24.15 41.89,27.6 44.36,31.54 46.33,34.01 48.05,35.58 48.05,47.71 46.23,49.78 28.09,49.78 26.12,47.71 26.12,17.25 27.85,14.29 29.57,12.32" fill="#cfa572"/><rect x="34.5" y="49.53" width="5.42" height="16.61" fill="#cfa572"/><polygon points="34.5,66.14 41.65,66.14 41.65,70.97 48.55,70.97 48.55,72.94 50.27,72.94 50.27,76.89 25.87,76.89 25.87,72.94 27.6,72.94 27.6,71.96 29.57,70.97 31.54,69.99 32.77,69 34.5,67.62" fill="#8350d1"/><rect x="34.5" y="66.04" width="6.41" height="1.18" fill="#060606"/><rect x="31.05" y="26.12" width="3.45" height="1.48" fill="#060606"/><rect x="32.77" y="27.6" width="1.72" height="1.97" fill="#060606"/><rect x="40.17" y="26.12" width="1.72" height="2.96" fill="#060606"/><rect x="33.02" y="41.65" width="8.87" height="1.72" fill="#b05ac6"/><rect x="34.75" y="43.37" width="5.42" height="1.58" fill="#b05ac6"/></svg></span><span class="pt"><span class="pn" style="letter-spacing:-0.45px">John Doe 1</span><span class="pr">Senior Analyst</span></span></div>
  <div class="td c-age"><span class="t-age">37</span></div>
  <div class="td c-mail"><span class="t-mail" style="letter-spacing:0.06px">user1@example.com</span></div>
  <div class="td c-phone"><span class="t-phone" style="letter-spacing:1.37px">+1 188-544-6642</span></div>
  <div class="td c-dept"><span class="t-dept">HR</span></div>
</div>
<div class="tr">
  <div class="td c-sel"><span class="cb"></span></div>
  <div class="td c-name"><span class="t-name" style="letter-spacing:0.3px">John Doe 2</span></div>
  <div class="td c-prof"><span class="av"><svg width="76" height="76" viewBox="0 0 76 76"><rect x="14.29" y="63.58" width="47.56" height="13.31" fill="#5067d4"/><rect x="0" y="66.14" width="76.89" height="10.74" fill="#5067d4"/><polygon points="12.07,66.14 14.29,64.07 14.29,66.14" fill="#5067d4"/><polygon points="64.07,66.14 61.85,64.07 61.85,66.14" fill="#5067d4"/><rect x="14.29" y="61.85" width="47.56" height="1.82" fill="#060606"/><rect x="12.07" y="63.58" width="2.32" height="2.56" rx="0.9" fill="#060606"/><rect x="61.75" y="63.58" width="2.32" height="2.56" rx="0.9" fill="#060606"/><polygon points="13.21,66.14 14.39,64.47 14.39,66.14" fill="#5067d4"/><polygon points="62.94,66.14 61.75,64.47 61.75,66.14" fill="#5067d4"/><polygon points="27.85,6.9 46.57,6.9 46.57,8.87 48.55,8.87 48.55,10.35 50.27,10.35 50.27,12.32 52,12.32 52,17.25 53.72,17.25 53.72,42.39 52,42.39 52,56.92 53.72,56.92 53.72,61.85 54.95,61.85 54.95,76.89 19.22,76.89 19.22,63.58 20.95,63.58 20.95,60.13 22.42,60.13 22.42,42.39 20.95,42.39 20.95,17.25 22.42,17.25 22.42,12.32 24.15,12.32 24.15,10.35 25.87,10.35 25.87,8.87 27.85,8.87" fill="#84493c"/><polygon points="31.05,10.1 42.88,10.1 44.6,12.32 46.33,14.79 48.05,17.25 48.05,42.88 46.33,45.1 44.85,45.1 44.85,41.89 42.88,40.17 31.54,40.17 29.57,41.89 29.57,45.1 27.85,45.1 26.12,42.88 26.12,17.25 27.85,14.79 29.57,12.32" fill="#d7b4aa"/><polygon points="31.54,41.89 42.39,41.89 42.39,44.85 41.4,44.85 41.4,46.72 33.51,46.72 33.51,44.85 31.54,44.85" fill="#e3c3b9"/><rect x="32.77" y="41.89" width="8.87" height="2.71" fill="#fff"/><rect x="34.5" y="44.6" width="5.42" height="0.99" fill="#f6e6e1"/><rect x="34.5" y="54.95" width="5.42" height="11.19" fill="#d7b4aa"/><polygon points="24.15,76.89 24.15,70.97 26.12,70.97 26.12,69 27.85,69 27.85,70.97 31.05,70.97 31.05,69 32.77,69 32.77,66.14 41.65,66.14 41.65,70.97 46.33,70.97 46.33,69 50.27,69 50.27,72.45 54.95,72.45 54.95,76.89" fill="#5067d4"/><rect x="34.5" y="66.04" width="5.67" height="1.18" fill="#060606"/><rect x="29.57" y="24.15" width="6.75" height="5.27" fill="#9aa2c8"/><rect x="38.1" y="24.15" width="6.75" height="5.27" fill="#9aa2c8"/><rect x="31.05" y="25.63" width="3.2" height="1.48" fill="#2f4a73"/><rect x="32.68" y="27.11" width="1.72" height="2.07" fill="#2f4a73"/><rect x="40.17" y="25.63" width="3.2" height="1.48" fill="#2f4a73"/><rect x="40.17" y="27.11" width="1.63" height="2.07" fill="#2f4a73"/><rect x="26.12" y="22.42" width="21.93" height="1.72" fill="#050505"/><rect x="27.85" y="24.15" width="1.72" height="4.68" fill="#050505"/><rect x="36.22" y="24.15" width="1.97" height="6.41" fill="#050505"/><rect x="44.85" y="24.15" width="1.72" height="4.68" fill="#050505"/><polygon points="28.83,28.83 29.57,28.83 29.57,29.42 36.22,29.42 36.22,31.15 29.82,31.15" fill="#050505"/><polygon points="45.59,28.83 44.85,28.83 44.85,29.42 38.2,29.42 38.2,31.15 44.6,31.15" fill="#050505"/><rect x="36.57" y="22.42" width="1.03" height="1.13" fill="#e9cfc6"/></svg></span><span class="pt"><span class="pn" style="letter-spacing:-0.05px">John Doe 2</span><span class="pr">Senior Coordinator</span></span></div>
  <div class="td c-age"><span class="t-age">32</span></div>
  <div class="td c-mail"><span class="t-mail" style="letter-spacing:0.25px">user2@example.com</span></div>
  <div class="td c-phone"><span class="t-phone" style="letter-spacing:1.58px">+1 84-39-8878</span></div>
  <div class="td c-dept"><span class="t-dept">IT</span></div>
</div>
<div class="tr">
  <div class="td c-sel"><span class="cb"></span></div>
  <div class="td c-name"><span class="t-name" style="letter-spacing:0.3px">John Doe 3</span></div>
  <div class="td c-prof"><span class="av"><svg width="76" height="76" viewBox="0 0 76 76"><rect x="14.29" y="63.58" width="47.56" height="13.31" fill="#5067d4"/><rect x="0" y="66.14" width="76.89" height="10.74" fill="#5067d4"/><polygon points="12.07,66.14 14.29,64.07 14.29,66.14" fill="#5067d4"/><polygon points="64.07,66.14 61.85,64.07 61.85,66.14" fill="#5067d4"/><rect x="14.29" y="61.85" width="47.56" height="1.82" fill="#060606"/><rect x="12.07" y="63.58" width="2.32" height="2.56" rx="0.9" fill="#060606"/><rect x="61.75" y="63.58" width="2.32" height="2.56" rx="0.9" fill="#060606"/><polygon points="13.21,66.14 14.39,64.47 14.39,66.14" fill="#5067d4"/><polygon points="62.94,66.14 61.75,64.47 61.75,66.14" fill="#5067d4"/><polygon points="27.85,6.9 46.57,6.9 46.57,8.87 48.55,8.87 48.55,10.35 50.27,10.35 50.27,12.32 52,12.32 52,17.25 53.72,17.25 53.72,42.39 52,42.39 52,56.92 53.72,56.92 53.72,61.85 54.95,61.85 54.95,76.89 19.22,76.89 19.22,63.58 20.95,63.58 20.95,60.13 22.42,60.13 22.42,42.39 20.95,42.39 20.95,17.25 22.42,17.25 22.42,12.32 24.15,12.32 24.15,10.35 25.87,10.35 25.87,8.87 27.85,8.87" fill="#b05ce0"/><polygon points="31.54,10.6 35.73,10.6 35.73,11.83 34.5,12.91 34.11,14.79 35.73,18.73 37.46,21.69 39.43,24.15 41.89,27.6 44.36,31.54 46.33,34.01 48.05,35.58 48.05,47.71 46.23,49.78 28.09,49.78 26.12,47.71 26.12,17.25 27.85,14.29 29.57,12.32" fill="#cfa572"/><rect x="34.5" y="49.53" width="5.42" height="16.61" fill="#cfa572"/><polygon points="34.5,66.14 41.65,66.14 41.65,70.97 48.55,70.97 48.55,72.94 50.27,72.94 50.27,76.89 25.87,76.89 25.87,72.94 27.6,72.94 27.6,71.96 29.57,70.97 31.54,69.99 32.77,69 34.5,67.62" fill="#5067d4"/><rect x="34.5" y="66.04" width="6.41" height="1.18" fill="#060606"/><rect x="26.12" y="22.42" width="11.34" height="1.72" fill="#060606"/><polygon points="27.85,24.15 36.22,24.15 36.22,31.15 29.82,31.15 27.85,29.08" fill="#060606"/><polygon points="36.22,22.42 37.95,22.42 37.95,24.15 39.43,24.15 41.89,27.6 44.6,31.15 37.95,31.15 37.95,29.57 36.22,29.57" fill="#060606"/><rect x="36.57" y="29.57" width="1.03" height="1.58" fill="#cfa572"/><rect x="33.02" y="41.65" width="8.87" height="1.72" fill="#fff"/><rect x="34.75" y="43.37" width="5.42" height="1.48" fill="#fff"/><rect x="35.98" y="44.85" width="2.07" height="1.77" fill="#060606"/><rect x="33.02" y="48.05" width="8.87" height="1.82" fill="#060606"/><rect x="34.75" y="49.78" width="5.42" height="2.07" fill="#060606"/></svg></span><span class="pt"><span class="pn" style="letter-spacing:0px">John Doe 3</span><span class="pr">Senior Developer</span></span></div>
  <div class="td c-age"><span class="t-age">53</span></div>
  <div class="td c-mail"><span class="t-mail" style="letter-spacing:0.32px">user3@example.com</span></div>
  <div class="td c-phone"><span class="t-phone" style="letter-spacing:0.64px">+1 733-971-2461</span></div>
  <div class="td c-dept"><span class="t-dept">IT</span></div>
</div>
<div class="tr">
  <div class="td c-sel"><span class="cb"></span></div>
  <div class="td c-name"><span class="t-name" style="letter-spacing:0.45px">John Doe 4</span></div>
  <div class="td c-prof"><span class="av"><svg width="76" height="76" viewBox="0 0 76 76"><rect x="14.29" y="63.58" width="47.56" height="13.31" fill="#8350d1"/><rect x="0" y="66.14" width="76.89" height="10.74" fill="#8350d1"/><polygon points="12.07,66.14 14.29,64.07 14.29,66.14" fill="#8350d1"/><polygon points="64.07,66.14 61.85,64.07 61.85,66.14" fill="#8350d1"/><rect x="14.29" y="61.85" width="47.56" height="1.82" fill="#060606"/><rect x="12.07" y="63.58" width="2.32" height="2.56" rx="0.9" fill="#060606"/><rect x="61.75" y="63.58" width="2.32" height="2.56" rx="0.9" fill="#060606"/><polygon points="13.21,66.14 14.39,64.47 14.39,66.14" fill="#8350d1"/><polygon points="62.94,66.14 61.75,64.47 61.75,66.14" fill="#8350d1"/><rect x="34.5" y="49.29" width="5.42" height="16.86" fill="#cfa572"/><polygon points="32.63,63.58 34.5,63.58 34.5,66.14 40.17,66.14 40.17,63.58 41.79,63.58 40.51,67.23 34.11,67.23" fill="#060606"/><rect x="34.5" y="61.85" width="5.42" height="4.29" fill="#cfa572"/><polygon points="29.57,8.87 44.6,8.87 46.57,10.6 48.05,12.32 48.05,21.19 26.12,21.19 26.12,12.32 27.85,10.6" fill="#060606"/><polygon points="26.12,20.7 48.05,20.7 48.05,47.71 46.23,49.78 28.09,49.78 26.12,47.71" fill="#cfa572"/><rect x="24.15" y="24.15" width="25.87" height="10.35" fill="#cfa572"/><polygon points="27.6,20.95 27.85,18.97 29.57,18.97 29.57,17.25 31.54,17.25 31.54,16.26 33.51,16.26 33.51,15.28 35.49,15.28 35.49,14.29 37.95,14.29 37.95,13.31 39.92,13.31 39.92,12.07 42.88,12.07 42.88,14.29 44.11,14.29 44.11,15.77 45.34,15.77 45.34,17.25 46.43,17.25 46.43,20.95" fill="#cfa572"/><rect x="31.05" y="25.63" width="3.2" height="1.48" fill="#060606"/><rect x="32.68" y="27.11" width="1.72" height="2.07" fill="#060606"/><rect x="40.17" y="25.63" width="3.2" height="1.48" fill="#060606"/><rect x="40.17" y="27.11" width="1.63" height="2.07" fill="#060606"/><rect x="26.12" y="22.42" width="21.93" height="1.72" fill="#9a7b2e"/><rect x="27.85" y="24.15" width="1.72" height="4.68" fill="#9a7b2e"/><rect x="36.22" y="24.15" width="1.97" height="6.41" fill="#9a7b2e"/><rect x="44.85" y="24.15" width="1.72" height="4.68" fill="#9a7b2e"/><polygon points="28.83,28.83 29.57,28.83 29.57,29.42 36.22,29.42 36.22,31.15 29.82,31.15" fill="#9a7b2e"/><polygon points="45.59,28.83 44.85,28.83 44.85,29.42 38.2,29.42 38.2,31.15 44.6,31.15" fill="#9a7b2e"/><rect x="36.57" y="22.42" width="1.03" height="1.13" fill="#9a7b2e"/><rect x="33.02" y="41.65" width="8.87" height="1.72" fill="#fff"/><rect x="34.75" y="43.37" width="5.42" height="1.48" fill="#fff"/></svg></span><span class="pt"><span class="pn" style="letter-spacing:0.1px">John Doe 4</span><span class="pr">Senior Developer</span></span></div>
  <div class="td c-age"><span class="t-age">26</span></div>
  <div class="td c-mail"><span class="t-mail" style="letter-spacing:0.34px">user4@example.com</span></div>
  <div class="td c-phone"><span class="t-phone" style="letter-spacing:1.59px">+1 358-825-9983</span></div>
  <div class="td c-dept"><span class="t-dept mk">Marketing</span></div>
</div>
<div class="tr">
  <div class="td c-sel"><span class="cb"></span></div>
  <div class="td c-name"><span class="t-name" style="letter-spacing:0.3px">John Doe 5</span></div>
  <div class="td c-prof"><span class="av"><svg width="76" height="76" viewBox="0 0 76 76"><rect x="14.29" y="63.58" width="47.56" height="13.31" fill="#8350d1"/><rect x="0" y="66.14" width="76.89" height="10.74" fill="#8350d1"/><polygon points="12.07,66.14 14.29,64.07 14.29,66.14" fill="#8350d1"/><polygon points="64.07,66.14 61.85,64.07 61.85,66.14" fill="#8350d1"/><rect x="14.29" y="61.85" width="47.56" height="1.82" fill="#060606"/><rect x="12.07" y="63.58" width="2.32" height="2.56" rx="0.9" fill="#060606"/><rect x="61.75" y="63.58" width="2.32" height="2.56" rx="0.9" fill="#060606"/><polygon points="13.21,66.14 14.39,64.47 14.39,66.14" fill="#8350d1"/><polygon points="62.94,66.14 61.75,64.47 61.75,66.14" fill="#8350d1"/><polygon points="27.85,6.9 46.57,6.9 46.57,8.87 48.55,8.87 48.55,10.35 50.27,10.35 50.27,12.32 52,12.32 52,17.25 53.72,17.25 53.72,42.39 52,42.39 52,56.92 53.72,56.92 53.72,61.85 54.95,61.85 54.95,76.89 19.22,76.89 19.22,63.58 20.95,63.58 20.95,60.13 22.42,60.13 22.42,42.39 20.95,42.39 20.95,17.25 22.42,17.25 22.42,12.32 24.15,12.32 24.15,10.35 25.87,10.35 25.87,8.87 27.85,8.87" fill="#d0d45c"/><polygon points="31.54,10.6 35.73,10.6 35.73,11.83 34.5,12.91 34.11,14.79 35.73,18.73 37.46,21.69 39.43,24.15 41.89,27.6 44.36,31.54 46.33,34.01 48.05,35.58 48.05,47.71 46.23,49.78 28.09,49.78 26.12,47.71 26.12,17.25 27.85,14.29 29.57,12.32" fill="#cfa572"/><rect x="34.5" y="49.53" width="5.42" height="16.61" fill="#cfa572"/><polygon points="34.5,66.14 41.65,66.14 41.65,70.97 48.55,70.97 48.55,72.94 50.27,72.94 50.27,76.89 25.87,76.89 25.87,72.94 27.6,72.94 27.6,71.96 29.57,70.97 31.54,69.99 32.77,69 34.5,67.62" fill="#8350d1"/><rect x="34.5" y="66.04" width="6.41" height="1.18" fill="#060606"/><rect x="31.05" y="26.12" width="3.45" height="1.48" fill="#060606"/><rect x="32.77" y="27.6" width="1.72" height="1.97" fill="#060606"/><rect x="40.17" y="26.12" width="1.72" height="2.96" fill="#060606"/><rect x="33.02" y="41.65" width="8.87" height="1.72" fill="#b05ac6"/><rect x="34.75" y="43.37" width="5.42" height="1.58" fill="#b05ac6"/></svg></span><span class="pt"><span class="pn" style="letter-spacing:0px">John Doe 5</span><span class="pr">Senior Developer</span></span></div>
  <div class="td c-age"><span class="t-age">58</span></div>
  <div class="td c-mail"><span class="t-mail" style="letter-spacing:0.34px">user5@example.com</span></div>
  <div class="td c-phone"><span class="t-phone" style="letter-spacing:0.96px">+1 928-106-9166</span></div>
  <div class="td c-dept"><span class="t-dept">IT</span></div>
</div>
<div class="tr">
  <div class="td c-sel"><span class="cb"></span></div>
  <div class="td c-name"><span class="t-name" style="letter-spacing:0.45px">John Doe 6</span></div>
  <div class="td c-prof"><span class="av"><svg width="76" height="76" viewBox="0 0 76 76"><rect x="14.29" y="63.58" width="47.56" height="13.31" fill="#dde05c"/><rect x="0" y="66.14" width="76.89" height="10.74" fill="#dde05c"/><polygon points="12.07,66.14 14.29,64.07 14.29,66.14" fill="#dde05c"/><polygon points="64.07,66.14 61.85,64.07 61.85,66.14" fill="#dde05c"/><rect x="14.29" y="61.85" width="47.56" height="1.82" fill="#060606"/><rect x="12.07" y="63.58" width="2.32" height="2.56" rx="0.9" fill="#060606"/><rect x="61.75" y="63.58" width="2.32" height="2.56" rx="0.9" fill="#060606"/><polygon points="13.21,66.14 14.39,64.47 14.39,66.14" fill="#dde05c"/><polygon points="62.94,66.14 61.75,64.47 61.75,66.14" fill="#dde05c"/><rect x="34.5" y="49.29" width="5.42" height="16.86" fill="#cfa572"/><polygon points="32.63,63.58 34.5,63.58 34.5,66.14 40.17,66.14 40.17,63.58 41.79,63.58 40.51,67.23 34.11,67.23" fill="#060606"/><rect x="34.5" y="61.85" width="5.42" height="4.29" fill="#cfa572"/><polygon points="27.85,7.15 46.57,7.15 46.57,10.6 48.05,10.6 48.05,16.76 26.12,16.76 26.12,10.6 27.85,10.6" fill="#d6605a"/><polygon points="29.57,12.32 44.6,12.32 44.6,14.29 46.33,14.29 46.33,16.76 48.05,16.76 48.05,47.71 46.23,49.78 28.09,49.78 26.12,47.71 26.12,16.76 27.85,16.76 27.85,14.29 29.57,14.29" fill="#cfa572"/><rect x="24.15" y="24.15" width="25.87" height="10.35" fill="#cfa572"/><rect x="31.05" y="26.12" width="3.45" height="1.48" fill="#060606"/><rect x="32.77" y="27.6" width="1.72" height="1.97" fill="#060606"/><rect x="40.17" y="26.12" width="3.2" height="1.48" fill="#060606"/><rect x="40.17" y="27.6" width="1.63" height="1.97" fill="#060606"/><rect x="31.05" y="40.17" width="12.07" height="1.58" fill="#e0605a"/><rect x="33.02" y="41.65" width="8.87" height="1.72" fill="#fff"/><rect x="34.75" y="43.37" width="5.42" height="1.48" fill="#fff"/></svg></span><span class="pt"><span class="pn" style="letter-spacing:0.1px">John Doe 6</span><span class="pr">Senior Analyst</span></span></div>
  <div class="td c-age"><span class="t-age">55</span></div>
  <div class="td c-mail"><span class="t-mail" style="letter-spacing:0.34px">user6@example.com</span></div>
  <div class="td c-phone"><span class="t-phone" style="letter-spacing:0.96px">+1 718-206-7932</span></div>
  <div class="td c-dept"><span class="t-dept mk">Marketing</span></div>
</div>
<div class="tr">
  <div class="td c-sel"><span class="cb"></span></div>
  <div class="td c-name"><span class="t-name" style="letter-spacing:0.2px">John Doe 7</span></div>
  <div class="td c-prof"><span class="av"><svg width="76" height="76" viewBox="0 0 76 76"><rect x="34.38" y="49.5" width="5.5" height="26.81" fill="#d7b4aa"/><polygon points="25.95,9.28 48.13,9.28 48.13,48.47 46.75,49.91 27.84,49.91 25.95,48.47" fill="#d7b4aa"/><rect x="24.06" y="24.06" width="25.78" height="10.31" fill="#d7b4aa"/><polygon points="25.95,9.28 48.13,9.28 48.13,18.91 46.24,18.91 46.24,13.75 45.03,13.75 45.03,12.03 29.22,12.03 29.22,13.75 28.02,13.75 28.02,18.91 25.95,18.91" fill="#a855e0"/><rect x="29.22" y="5.16" width="1.72" height="4.3" fill="#a855e0"/><rect x="39.88" y="5.16" width="1.72" height="4.3" fill="#a855e0"/><rect x="25.95" y="7.05" width="1.55" height="2.41" fill="#a855e0"/><rect x="32.83" y="7.05" width="1.55" height="2.41" fill="#a855e0"/><rect x="36.09" y="7.05" width="1.72" height="2.41" fill="#a855e0"/><rect x="43.14" y="7.05" width="1.55" height="2.41" fill="#a855e0"/><rect x="46.75" y="7.05" width="1.38" height="2.41" fill="#a855e0"/><rect x="25.95" y="22.34" width="22.17" height="1.79" fill="#060606"/><polygon points="28.02,24.06 46.06,24.06 46.06,29.22 44.69,29.22 44.69,30.94 37.81,30.94 37.81,28.7 36.09,28.7 36.09,30.94 29.56,30.94 29.56,29.22 28.02,29.22" fill="#060606"/><rect x="36.16" y="22.17" width="1.58" height="1.55" fill="#e9cfc6"/><rect x="31.28" y="40.05" width="11.69" height="1.27" fill="#d08a2a"/><rect x="29.22" y="41.6" width="1.72" height="3.09" fill="#d08a2a"/><rect x="43.31" y="41.6" width="1.72" height="3.09" fill="#d08a2a"/><rect x="27.84" y="48.47" width="18.91" height="1.44" fill="#d08a2a"/><rect x="25.95" y="45.03" width="1.65" height="1.65" fill="#d08a2a"/><rect x="27.67" y="46.75" width="1.65" height="1.65" fill="#d08a2a"/><rect x="29.39" y="45.03" width="1.65" height="1.65" fill="#d08a2a"/><rect x="31.11" y="46.75" width="1.65" height="1.65" fill="#d08a2a"/><rect x="32.83" y="45.03" width="1.65" height="1.65" fill="#d08a2a"/><rect x="34.55" y="46.75" width="1.65" height="1.65" fill="#d08a2a"/><rect x="36.27" y="45.03" width="1.65" height="1.65" fill="#d08a2a"/><rect x="37.99" y="46.75" width="1.65" height="1.65" fill="#d08a2a"/><rect x="39.7" y="45.03" width="1.65" height="1.65" fill="#d08a2a"/><rect x="41.42" y="46.75" width="1.65" height="1.65" fill="#d08a2a"/><rect x="43.14" y="45.03" width="1.65" height="1.65" fill="#d08a2a"/><rect x="44.86" y="46.75" width="1.65" height="1.65" fill="#d08a2a"/><rect x="46.58" y="45.03" width="1.65" height="1.65" fill="#d08a2a"/><rect x="30.94" y="45.03" width="1.72" height="1.72" fill="#d08a2a"/><rect x="41.6" y="45.03" width="1.72" height="1.72" fill="#d08a2a"/><rect x="32.66" y="41.77" width="8.94" height="1.62" fill="#fff"/><rect x="34.38" y="43.31" width="5.5" height="1.79" fill="#fff"/><rect x="36.09" y="45.1" width="1.72" height="1.38" fill="#d08a2a"/></svg></span><span class="pt"><span class="pn" style="letter-spacing:-0.15px">John Doe 7</span><span class="pr">Senior Developer</span></span></div>
  <div class="td c-age"><span class="t-age">32</span></div>
  <div class="td c-mail"><span class="t-mail" style="letter-spacing:0.18px">user7@example.com</span></div>
  <div class="td c-phone"><span class="t-phone" style="letter-spacing:0.08px">+1 118-713-74</span></div>
  <div class="td c-dept"><span class="t-dept">IT</span></div>
</div>
        
<div class="fixed">
  <div class="fshadow"></div>
  <div class="fth"><span class="tht">Status</span><span class="filt"><svg class="ic " width="24" height="24" viewBox="64 64 896 896" fill="currentColor"><path d="M349 838c0 17.700 14.200 32 31.800 32h262.400c17.600 0 31.800-14.300 31.800-32V642H349v196zm531.100-684H143.900c-24.500 0-39.800 26.700-27.500 48l221.300 376h348.800l221.300-376c12.100-21.300-3.200-48-27.700-48z"/></svg></span></div>
  <div class="str"><span class="inact">Inactive</span></div><div class="str"><span class="inact">Inactive</span></div><div class="str"><span class="leave">On Leave</span></div><div class="str"><span class="inact">Inactive</span></div><div class="str"><span class="leave">On Leave</span></div><div class="str"><span class="leave">On Leave</span></div><div class="str"><span class="leave">On Leave</span></div><div class="str"><span class="leave">On Leave</span></div>
</div>
      </div>
    </div>
  </section>
</main>
<div class="fade"></div>
<div class="edge"></div>
</div>
</body>
</html>
